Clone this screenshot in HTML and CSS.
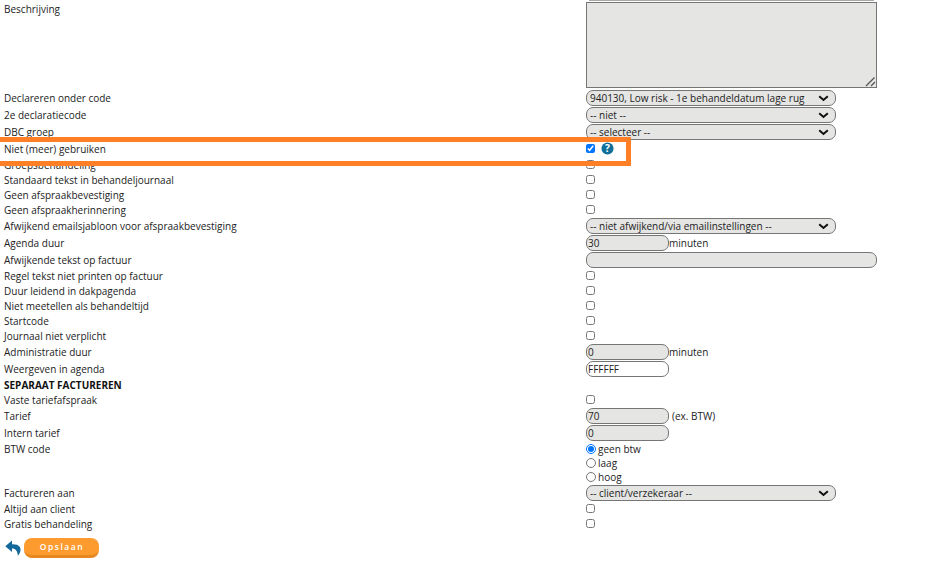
FILE: index.html
```html
<!DOCTYPE html>
<html lang="nl">
<head>
<meta charset="utf-8">
<title>Behandeling</title>
<link rel="stylesheet" href="styles.css">
</head>
<body>
<div class="highlight"></div>
<form class="form">
  <div class="r-top"><div class="prev-edge"></div></div>
  <div class="row r-area"><span class="label">Beschrijving</span><div class="area-wrap"><textarea class="area"></textarea>
    <svg class="grip" viewBox="0 0 11 11"><path d="M1 10 L9.5 1.5 M6 10 L10 6" stroke="#555" stroke-width="1.3" fill="none"/></svg></div></div>
  <div class="row r-17"><span class="label">Declareren onder code</span><div class="ctl"><select class="sel"><option>940130, Low risk - 1e behandeldatum lage rug</option></select></div></div>
  <div class="row r-17"><span class="label">2e declaratiecode</span><div class="ctl"><select class="sel"><option>-- niet --</option></select></div></div>
  <div class="row r-17"><span class="label">DBC groep</span><div class="ctl"><select class="sel"><option>-- selecteer --</option></select></div></div>
  <div class="row r-17"><span class="label">Niet (meer) gebruiken</span><div class="ctl"><input class="chk" type="checkbox" checked>
    <svg class="help" viewBox="0 0 14 14"><circle cx="7" cy="7" r="6.5" fill="#0f6f9b"/><text x="7" y="10.8" text-anchor="middle" class="help-q">?</text></svg></div></div>
  <div class="row r-15"><span class="label">Groepsbehandeling</span><div class="ctl"><input class="chk" type="checkbox"></div></div>
  <div class="row r-15"><span class="label">Standaard tekst in behandeljournaal</span><div class="ctl"><input class="chk" type="checkbox"></div></div>
  <div class="row r-15"><span class="label">Geen afspraakbevestiging</span><div class="ctl"><input class="chk" type="checkbox"></div></div>
  <div class="row r-15"><span class="label">Geen afspraakherinnering</span><div class="ctl"><input class="chk" type="checkbox"></div></div>
  <div class="row r-17"><span class="label">Afwijkend emailsjabloon voor afspraakbevestiging</span><div class="ctl"><select class="sel"><option>-- niet afwijkend/via emailinstellingen --</option></select></div></div>
  <div class="row r-17"><span class="label">Agenda duur</span><div class="ctl"><input class="inp" type="text" value="30"><span class="unit-tight">minuten</span></div></div>
  <div class="row r-17"><span class="label">Afwijkende tekst op factuur</span><div class="ctl"><input class="inp wide" type="text"></div></div>
  <div class="row r-15"><span class="label">Regel tekst niet printen op factuur</span><div class="ctl"><input class="chk" type="checkbox"></div></div>
  <div class="row r-15"><span class="label">Duur leidend in dakpagenda</span><div class="ctl"><input class="chk" type="checkbox"></div></div>
  <div class="row r-15"><span class="label">Niet meetellen als behandeltijd</span><div class="ctl"><input class="chk" type="checkbox"></div></div>
  <div class="row r-15"><span class="label">Startcode</span><div class="ctl"><input class="chk" type="checkbox"></div></div>
  <div class="row r-15"><span class="label">Journaal niet verplicht</span><div class="ctl"><input class="chk" type="checkbox"></div></div>
  <div class="row r-17"><span class="label">Administratie duur</span><div class="ctl"><input class="inp" type="text" value="0"><span class="unit-tight">minuten</span></div></div>
  <div class="row r-17"><span class="label">Weergeven in agenda</span><div class="ctl"><input class="inp white" type="text" value="FFFFFF"></div></div>
  <div class="row r-15"><span class="label strong">SEPARAAT FACTUREREN</span></div>
  <div class="row r-15"><span class="label">Vaste tariefafspraak</span><div class="ctl"><input class="chk" type="checkbox"></div></div>
  <div class="row r-17"><span class="label">Tarief</span><div class="ctl"><input class="inp" type="text" value="70"><span class="unit">(ex. BTW)</span></div></div>
  <div class="row r-17"><span class="label">Intern tarief</span><div class="ctl"><input class="inp" type="text" value="0"></div></div>
  <div class="row r-radio"><span class="label">BTW code</span>
    <div class="radios">
      <label class="radio"><input class="rad" type="radio" name="btw" checked>geen btw</label>
      <label class="radio"><input class="rad" type="radio" name="btw">laag</label>
      <label class="radio"><input class="rad" type="radio" name="btw">hoog</label>
    </div></div>
  <div class="row r-17"><span class="label">Factureren aan</span><div class="ctl"><select class="sel"><option>-- client/verzekeraar --</option></select></div></div>
  <div class="row r-15"><span class="label">Altijd aan client</span><div class="ctl"><input class="chk" type="checkbox"></div></div>
  <div class="row r-15"><span class="label">Gratis behandeling</span><div class="ctl"><input class="chk" type="checkbox"></div></div>
  <div class="actions">
    <svg class="back" viewBox="0 0 16 16"><path d="M7 0.5 L0.3 6.3 L7 12 L7 8.4 C10.4 8.3 12.4 10.2 12.9 15.8 C15.6 12.6 16.2 9.4 14.8 7 C13.4 4.8 10.6 4.2 7 4.3 Z" fill="#12689a"/></svg>
    <button class="save" type="button">Opslaan</button>
  </div>
</form>
</body>
</html>
```
FILE: styles.css
```css
html, body { margin: 0; padding: 0; background: #fff; }
body {
  width: 944px;
  height: 568px;
  overflow: hidden;
  position: relative;
  font-family: "Open Sans", "Liberation Sans", sans-serif;
  font-size: 10px;
  color: #222;
}
.form { display: flex; flex-direction: column; }
.r-top { height: 1px; padding-left: 589px; }
.prev-edge { width: 285px; height: 1px; background: #a8a8a8; }
.row { display: flex; align-items: center; padding-left: 4px; }
.label { width: 582px; flex: none; }
.strong { font-weight: 700; color: #111; }
.ctl { display: flex; align-items: center; }
.r-area { height: 88px; align-items: flex-start; }
.r-area .label { margin-top: 1px; }
.r-17 { height: 17px; }
.r-15 { height: 15px; }
.r-radio { height: 43px; align-items: flex-start; }
.r-radio .label { margin-top: 1px; }
.area-wrap { position: relative; margin-top: 1px; }
.area {
  display: block;
  box-sizing: border-box;
  width: 291px;
  height: 86px;
  margin: 0;
  padding: 2px;
  border: 1px solid #767676;
  border-radius: 0;
  background: #e5e5e3;
  resize: none;
}
.grip { position: absolute; right: 1px; bottom: 1px; width: 11px; height: 11px; }
.sel {
  box-sizing: border-box;
  width: 250px;
  height: 16px;
  margin: 0;
  padding: 0 0 0 3px;
  border: 1px solid #767676;
  border-radius: 7px;
  appearance: none;
  background-color: #e5e5e3;
  background-image: url("data:image/svg+xml,%3Csvg xmlns='http://www.w3.org/2000/svg' width='11' height='7'%3E%3Cpath d='M1.2 1.2 L5.5 5 L9.8 1.2' fill='none' stroke='%23111' stroke-width='2'/%3E%3C/svg%3E");
  background-repeat: no-repeat;
  background-position: 231px 4px;
  font: 10px "Open Sans", sans-serif;
  color: #222;
}
.inp {
  box-sizing: border-box;
  width: 83px;
  height: 16px;
  margin: 0;
  padding: 0 1px;
  border: 1px solid #767676;
  border-radius: 7px;
  background: #e5e5e3;
  font: 10px "Open Sans", sans-serif;
  color: #222;
}
.wide { width: 291px; }
.white { background: #fff; }
.unit-tight { margin-left: 0; }
.unit { margin-left: 3px; }
.chk { width: 9px; height: 9px; margin: 0; }
.help { width: 13px; height: 13px; margin-left: 6px; }
.help-q { font: 700 11px "Open Sans", sans-serif; fill: #fff; }
.radios { display: flex; flex-direction: column; margin-top: 1px; }
.radio { display: flex; align-items: center; height: 14px; }
.rad { width: 10px; height: 10px; margin: 0 2px 0 0; }
.actions { display: flex; align-items: center; gap: 3px; margin-top: 7px; padding-left: 5px; }
.back { width: 16px; height: 16px; }
.save {
  box-sizing: border-box;
  width: 75px;
  height: 20px;
  padding: 0 0 1px 1px;
  border: 0;
  border-bottom: 3px solid #e8861f;
  border-radius: 8px;
  background: #fd9b2f;
  color: #fff;
  font: 600 8.5px "Open Sans", sans-serif;
  letter-spacing: 1.5px;
}
.highlight {
  position: absolute;
  left: -6px;
  top: 137px;
  width: 627px;
  height: 19px;
  border: 5px solid #ff7f27;
  z-index: 2;
}
```
